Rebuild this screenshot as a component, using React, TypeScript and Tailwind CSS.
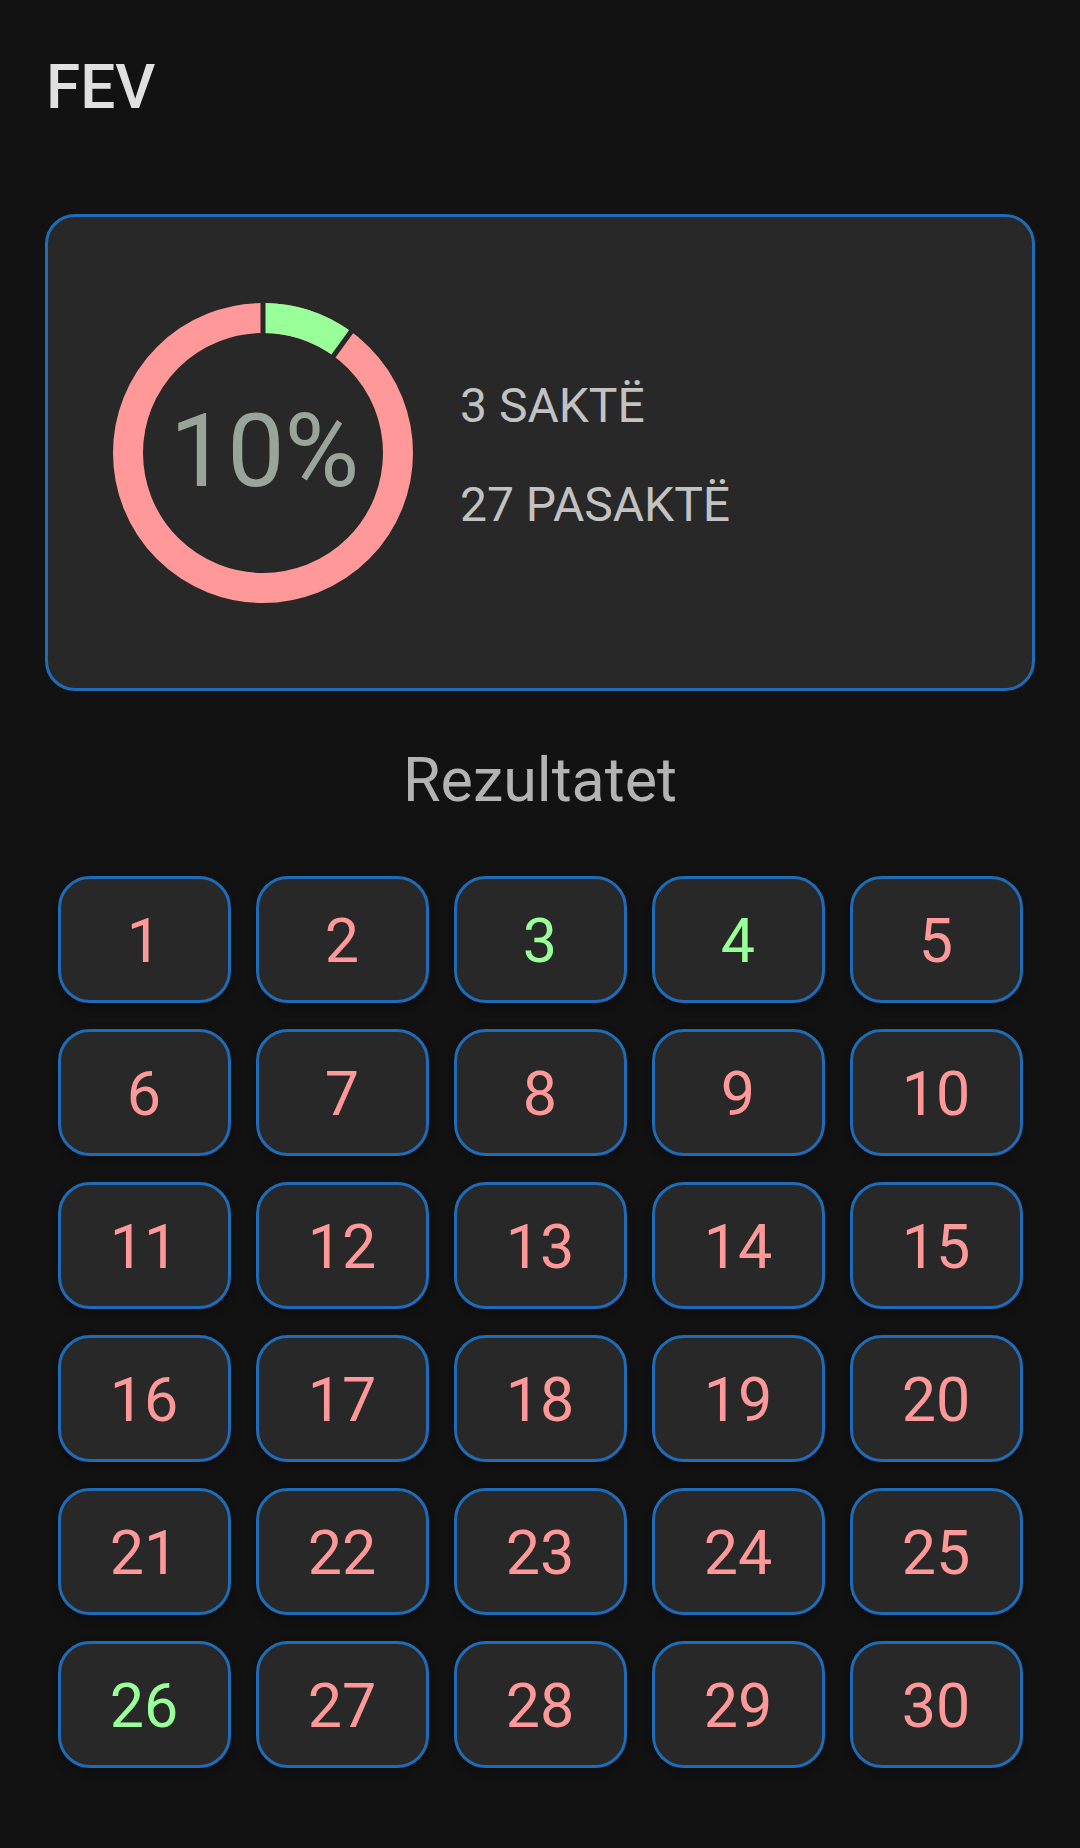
import React from "react";

const green = new Set([3, 4, 26]);

function Donut() {
  const a = (36 * Math.PI) / 180;
  const ex = 150 + 135 * Math.sin(a);
  const ey = 150 - 135 * Math.cos(a);
  const gx = 150 + 152 * Math.sin(a);
  const gy = 150 - 152 * Math.cos(a);
  return (
    <div className="relative w-[300px] h-[300px] shrink-0">
      <svg width="300" height="300" viewBox="0 0 300 300" className="absolute inset-0">
        <circle cx="150" cy="150" r="135" fill="none" stroke="#ff9999" strokeWidth="30" />
        <path d={`M150 15 A135 135 0 0 1 ${ex} ${ey}`} fill="none" stroke="#99ff99" strokeWidth="30" />
        <line x1="150" y1="150" x2="150" y2="-2" stroke="#282828" strokeWidth="5" />
        <line x1="150" y1="150" x2={gx} y2={gy} stroke="#282828" strokeWidth="5" />
        <circle cx="150" cy="150" r="119" fill="#282828" />
      </svg>
      <div className="absolute inset-0 flex items-center justify-center pb-[4px] pl-[3px]">
        <span className="text-[102px] leading-none text-[#99a59a] font-normal">10%</span>
      </div>
    </div>
  );
}

export default function App() {
  const nums = Array.from({ length: 30 }, (_, i) => i + 1);
  return (
    <div
      className="min-h-[1848px] w-[1080px] bg-[#121212] flex flex-col"
      style={{ fontFamily: "Roboto, 'Noto Sans', sans-serif" }}
    >
      <div className="pl-[46px] pt-[56px]">
        <h1 className="text-[62px] leading-none font-medium text-[#e0e0e0]">FEV</h1>
      </div>

      <div className="mx-[45px] mt-[96px] h-[477px] rounded-[30px] border-[3px] border-[#1e6cb8] bg-[#282828] flex items-center pl-[65px]">
        <Donut />
        <div className="ml-[47px] mt-[6px] flex flex-col gap-[51px] text-[48px] leading-none text-[#c2c2c2]">
          <span>3 SAKTË</span>
          <span>27 PASAKTË</span>
        </div>
      </div>

      <div className="mt-[59px] text-center text-[61px] leading-none text-[#b3b3b3]">Rezultatet</div>

      <div className="mt-[65px] px-[45px] grid grid-cols-5 gap-y-[26px]">
        {nums.map((n) => (
          <div key={n} className="flex justify-center">
            <div className="w-[173px] h-[127px] rounded-[32px] border-[3px] border-[#1e6cb8] bg-[#282828] shadow-[0_4px_10px_rgba(0,0,0,0.35)] flex items-center justify-center pt-[4px]">
              <span
                className={`text-[61px] leading-none ${green.has(n) ? "text-[#99ff99]" : "text-[#ff9999]"}`}
              >
                {n}
              </span>
            </div>
          </div>
        ))}
      </div>
    </div>
  );
}
